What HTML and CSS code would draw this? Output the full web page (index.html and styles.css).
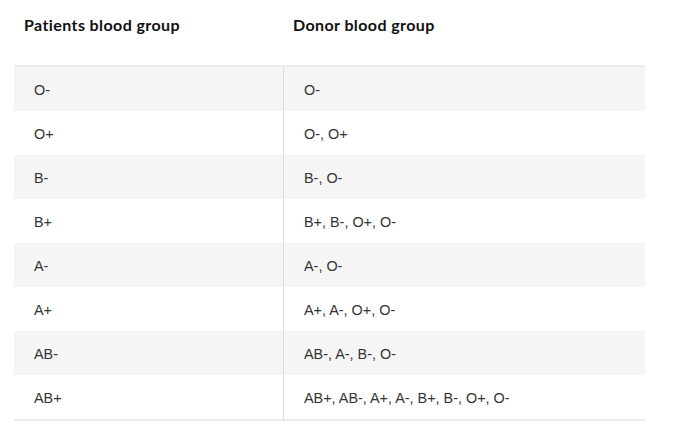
FILE: index.html
```html
<!DOCTYPE html>
<html>
<head>
<meta charset="utf-8">
<link rel="stylesheet" href="styles.css">
</head>
<body>
<div class="wrap">
<table class="blood">
<thead>
<tr><th class="c1">Patients blood group</th><th class="c2">Donor blood group</th></tr>
</thead>
<tbody>
<tr><td class="c1">O-</td><td class="c2">O-</td></tr>
<tr><td class="c1">O+</td><td class="c2">O-, O+</td></tr>
<tr><td class="c1">B-</td><td class="c2">B-, O-</td></tr>
<tr><td class="c1">B+</td><td class="c2">B+, B-, O+, O-</td></tr>
<tr><td class="c1">A-</td><td class="c2">A-, O-</td></tr>
<tr><td class="c1">A+</td><td class="c2">A+, A-, O+, O-</td></tr>
<tr><td class="c1">AB-</td><td class="c2">AB-, A-, B-, O-</td></tr>
<tr><td class="c1">AB+</td><td class="c2">AB+, AB-, A+, A-, B+, B-, O+, O-</td></tr>
</tbody>
</table>
</div>
</body>
</html>
```
FILE: styles.css
```css
html, body { margin: 0; padding: 0; background: #fff; }
.wrap { padding-left: 14px; }
.blood {
  width: 631px;
  border-collapse: separate;
  border-spacing: 0;
  table-layout: fixed;
}
.blood th {
  font-family: "Lato", "Noto Sans", sans-serif;
  font-weight: 700;
  font-size: 16px;
  letter-spacing: 0.4px;
  color: #111;
  text-align: left;
  padding: 15px 10px 0;
  height: 67px;
  vertical-align: top;
  line-height: 20px;
  box-sizing: border-box;
  border-bottom: 2px solid #ececec;
}
.blood th.c1 { width: 269px; }
.blood td {
  font-family: "Liberation Sans", Arial, sans-serif;
  font-size: 14.4px;
  color: #333;
  height: 44px;
  padding: 1px 20px 0;
  box-sizing: border-box;
  vertical-align: middle;
}
.blood td.c2 { border-left: 1px solid #dcdcdc; }
.blood tbody tr:nth-child(odd) td { background: #f5f5f5; }
.blood tbody tr:last-child td { border-bottom: 2px solid #ececec; height: 46px; }
```
